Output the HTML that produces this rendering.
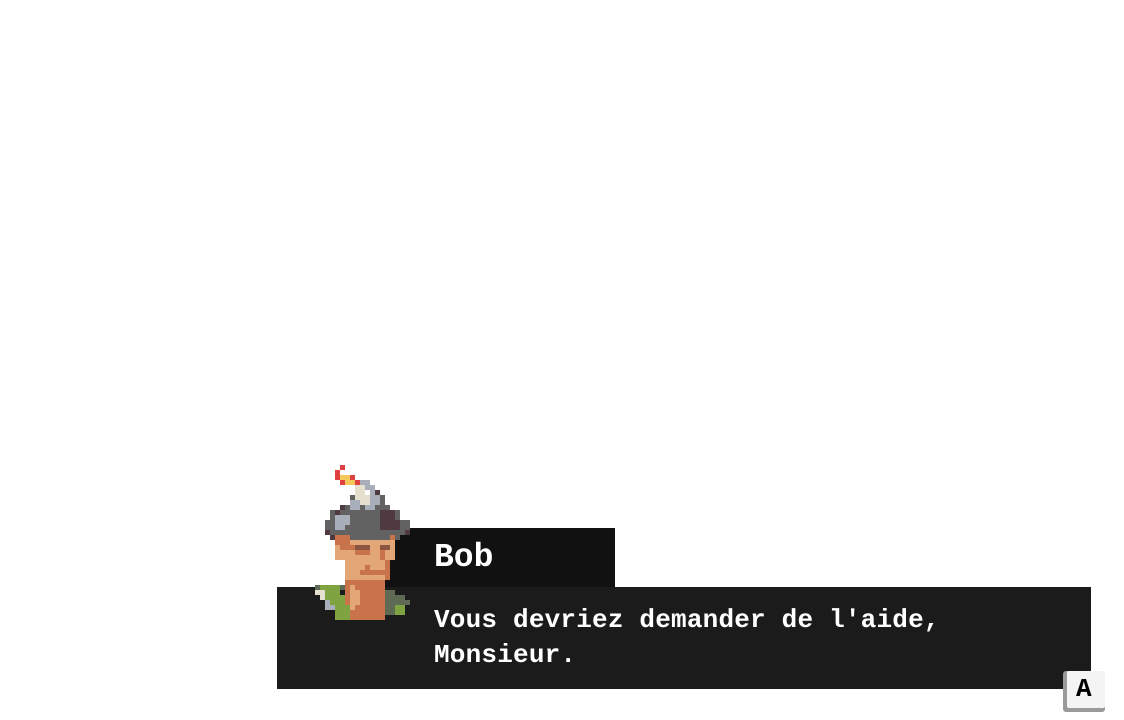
<!DOCTYPE html>
<html><head><meta charset="utf-8"><style>
html,body{margin:0;padding:0;width:1124px;height:720px;background:#fff;overflow:hidden;position:relative}
.box{position:absolute;background:#1b1b1b}
.t{position:absolute;color:#fff;font-family:"Liberation Mono",monospace;font-weight:bold;white-space:pre;line-height:1}
</style></head><body>
<div class="box" style="left:383px;top:528px;width:232px;height:60px;background:#111"></div>
<div class="box" style="left:277px;top:587px;width:814px;height:102px"></div>
<div class="t" style="left:434px;top:541px;font-size:33px">Bob</div>
<div class="t" style="left:434px;top:607px;font-size:26px;letter-spacing:0.2px">Vous devriez demander de l'aide,</div>
<div class="t" style="left:434px;top:642px;font-size:26px;letter-spacing:0.2px">Monsieur.</div>
<svg style="position:absolute;left:300px;top:460px" width="120" height="160" viewBox="0 0 24 32" shape-rendering="crispEdges">
<g fill="#e04040"><rect x="8" y="1" width="1" height="1"/><rect x="7" y="2" width="1" height="2"/><rect x="8" y="4" width="1" height="1"/><rect x="10" y="3" width="1" height="1"/><rect x="11" y="4" width="1" height="1"/></g>
<g fill="#f6c85a"><rect x="8" y="3" width="2" height="1"/><rect x="9" y="4" width="2" height="1"/></g>
<g fill="#626262"><rect x="10" y="7" width="7" height="3"/><rect x="8" y="9" width="10" height="2"/><rect x="6" y="10" width="14" height="2"/><rect x="5" y="12" width="17" height="3"/><rect x="6" y="15" width="14" height="1"/></g>
<g fill="#a9aebb"><rect x="12" y="4" width="2" height="2"/><rect x="13" y="5" width="2" height="1"/><rect x="14" y="6" width="2" height="3"/><rect x="10" y="8" width="2" height="2"/><rect x="13" y="9" width="2" height="1"/><rect x="7" y="11" width="3" height="2"/><rect x="7" y="12" width="2" height="2"/></g>
<g fill="#e5dfd0"><rect x="11" y="5" width="2" height="3"/><rect x="12" y="7" width="2" height="2"/></g>
<g fill="#4e3a40"><rect x="15" y="6" width="1" height="1"/><rect x="8" y="9" width="1" height="1"/><rect x="7" y="10" width="1" height="1"/><rect x="16" y="10" width="3" height="4"/><rect x="18" y="10" width="1" height="1"/><rect x="17" y="12" width="3" height="2"/><rect x="5" y="14" width="1" height="1"/><rect x="21" y="14" width="1" height="1"/><rect x="6" y="15" width="1" height="1"/><rect x="10" y="16" width="7" height="1"/></g>
<g fill="#e3a677"><rect x="7" y="16" width="12" height="4"/><rect x="8" y="19" width="11" height="1"/><rect x="9" y="20" width="9" height="4"/><rect x="9" y="24" width="3" height="1"/></g>
<g fill="#c8734a"><rect x="7" y="15" width="3" height="2"/><rect x="18" y="15" width="1" height="1"/><rect x="8" y="17" width="3" height="1"/><rect x="11" y="18" width="3" height="1"/><rect x="16" y="18" width="1" height="2"/><rect x="17" y="20" width="1" height="4"/><rect x="13" y="21" width="1" height="2"/><rect x="12" y="22" width="5" height="1"/><rect x="9" y="24" width="8" height="8"/></g>
<g fill="#e3a677"><rect x="10" y="25" width="1" height="5"/><rect x="11" y="26" width="1" height="3"/></g>
<g fill="#8b5540"><rect x="11" y="17" width="3" height="1"/><rect x="16" y="17" width="2" height="1"/></g>
<g fill="#7fa340"><rect x="4" y="25" width="4" height="2"/><rect x="5" y="27" width="4" height="2"/><rect x="7" y="29" width="3" height="3"/><rect x="19" y="29" width="2" height="2"/></g>
<g fill="#5e6a54"><rect x="3" y="25" width="1" height="1"/><rect x="8" y="25" width="1" height="1"/><rect x="17" y="26" width="2" height="5"/><rect x="19" y="27" width="2" height="2"/><rect x="21" y="28" width="1" height="1"/></g>
<g fill="#e5dfd0"><rect x="3" y="26" width="2" height="1"/><rect x="4" y="27" width="1" height="1"/></g>
<g fill="#a9aebb"><rect x="5" y="28" width="1" height="2"/><rect x="6" y="29" width="1" height="1"/></g>
</svg>
<div style="position:absolute;left:1063px;top:671px;width:42px;height:41px;background:#9a9a9a;border-radius:3px"></div>
<div style="position:absolute;left:1067px;top:671px;width:38px;height:37px;background:#f4f4f4;border-radius:2px"></div>
<div class="t" style="left:1076px;top:676px;font-size:26px;color:#000">A</div>
</body></html>
